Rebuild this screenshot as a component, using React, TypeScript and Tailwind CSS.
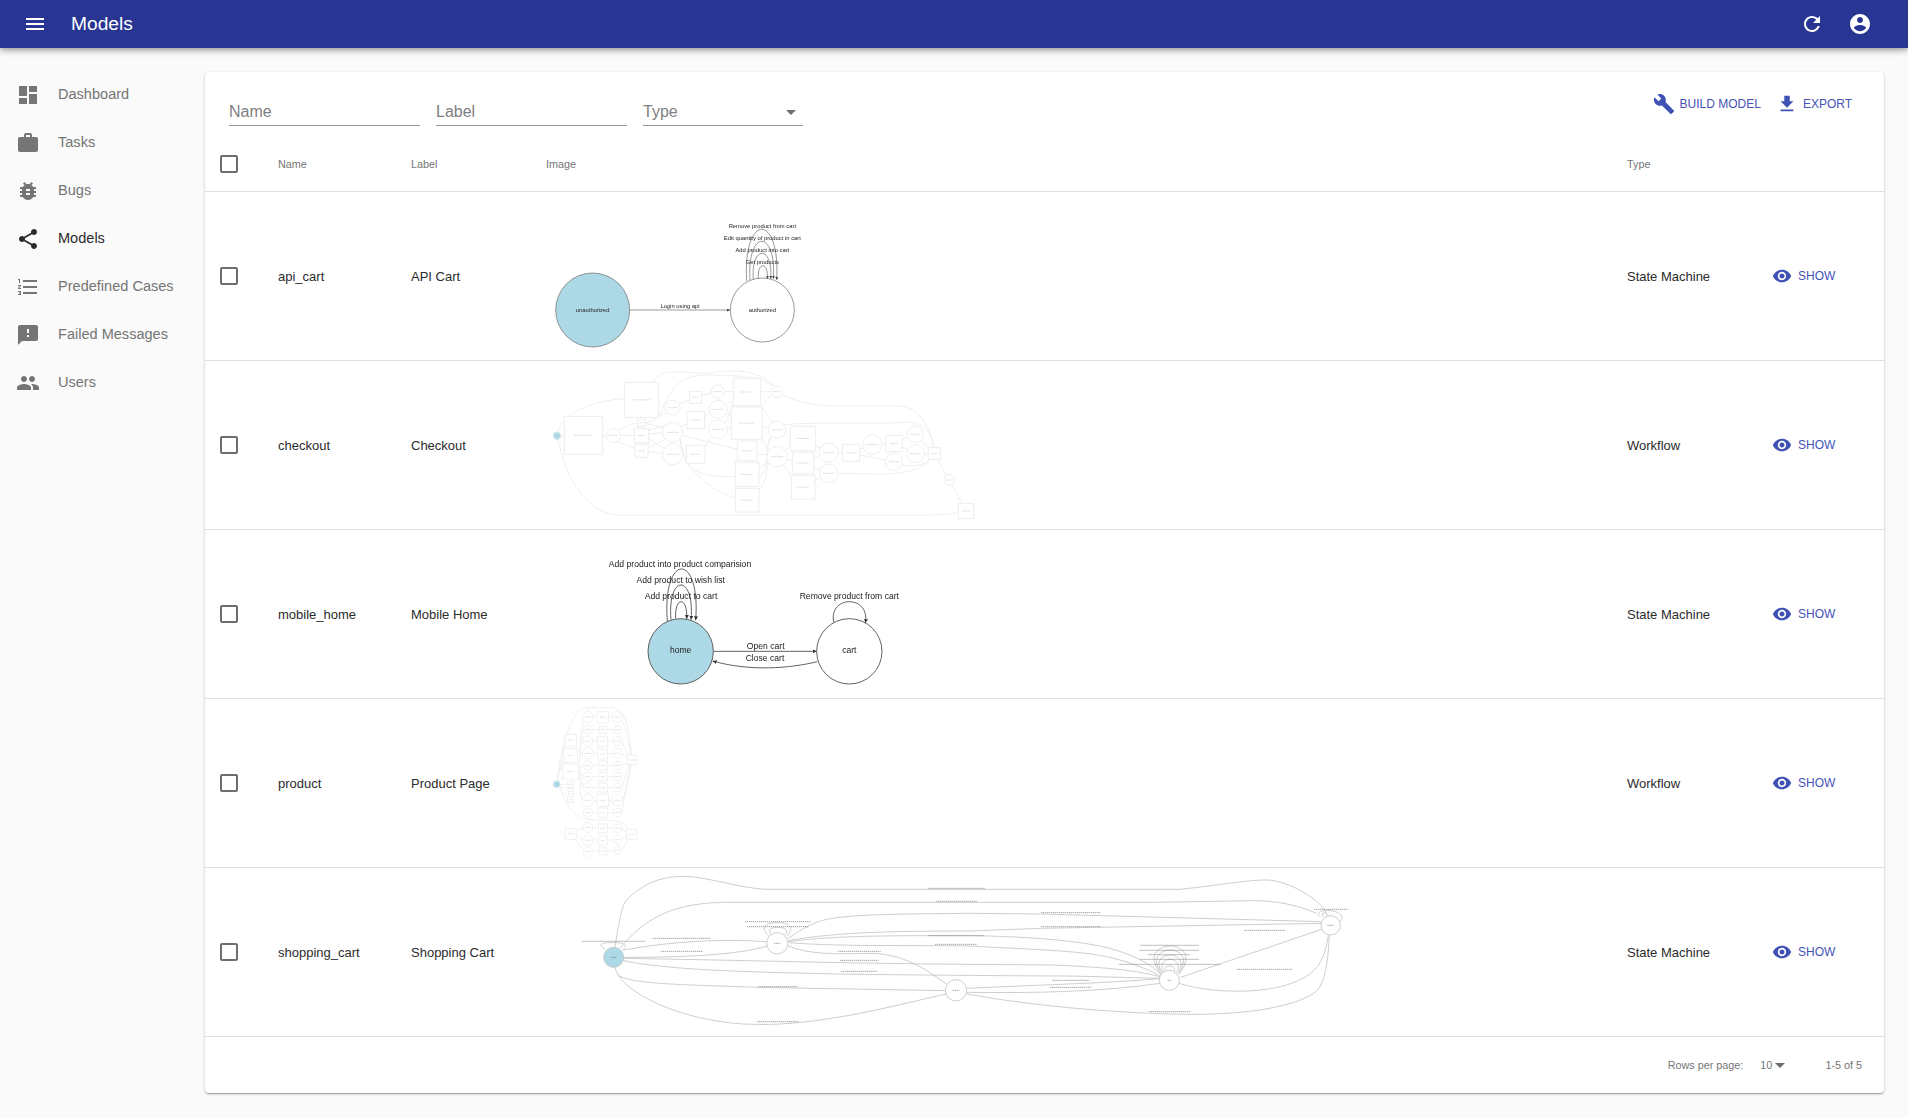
import type { ReactNode } from "react"

const icons = {
  menu: "M3 18h18v-2H3v2zm0-5h18v-2H3v2zm0-7v2h18V6H3z",
  dashboard: "M3 13h8V3H3v10zm0 8h8v-6H3v6zm10 0h8V11h-8v10zm0-18v6h8V3h-8z",
  work: "M20 6h-4V4c0-1.11-.89-2-2-2h-4c-1.11 0-2 .89-2 2v2H4c-1.11 0-1.99.89-1.99 2L2 19c0 1.11.89 2 2 2h16c1.11 0 2-.89 2-2V8c0-1.11-.89-2-2-2zm-6 0h-4V4h4v2z",
  bug: "M20 8h-2.81c-.45-.78-1.07-1.45-1.82-1.96L17 4.41 15.59 3l-2.17 2.17C12.96 5.06 12.49 5 12 5c-.49 0-.96.06-1.41.17L8.41 3 7 4.41l1.62 1.63C7.88 6.55 7.26 7.22 6.81 8H4v2h2.09c-.05.33-.09.66-.09 1v1H4v2h2v1c0 .34.04.67.09 1H4v2h2.81c1.04 1.79 2.97 3 5.19 3s4.15-1.21 5.19-3H20v-2h-2.09c.05-.33.09-.66.09-1v-1h2v-2h-2v-1c0-.34-.04-.67-.09-1H20V8zm-6 8h-4v-2h4v2zm0-4h-4v-2h4v2z",
  share: "M18 16.08c-.76 0-1.44.3-1.96.77L8.91 12.7c.05-.23.09-.46.09-.7s-.04-.47-.09-.7l7.05-4.11c.54.5 1.25.81 2.04.81 1.66 0 3-1.34 3-3s-1.34-3-3-3-3 1.34-3 3c0 .24.04.47.09.7L8.04 9.81C7.5 9.31 6.79 9 6 9c-1.66 0-3 1.34-3 3s1.34 3 3 3c.79 0 1.5-.31 2.04-.81l7.12 4.16c-.05.21-.08.43-.08.65 0 1.61 1.31 2.92 2.92 2.92 1.61 0 2.92-1.31 2.92-2.92s-1.31-2.92-2.92-2.92z",
  list: "M2 17h2v.5H3v1h1v.5H2v1h3v-4H2v1zm1-9h1V4H2v1h1v3zm-1 3h1.8L2 13.1v.9h3v-1H3.2L5 10.9V10H2v1zm5-6v2h14V5H7zm0 14h14v-2H7v2zm0-6h14v-2H7v2z",
  feedback: "M20 2H4c-1.1 0-1.99.9-1.99 2L2 22l4-4h14c1.1 0 2-.9 2-2V4c0-1.1-.9-2-2-2zm-7 12h-2v-2h2v2zm0-4h-2V6h2v4z",
  people: "M16 11c1.66 0 2.99-1.34 2.99-3S17.66 5 16 5c-1.66 0-3 1.34-3 3s1.34 3 3 3zm-8 0c1.66 0 2.99-1.34 2.99-3S9.66 5 8 5C6.34 5 5 6.34 5 8s1.34 3 3 3zm0 2c-2.33 0-7 1.17-7 3.5V19h14v-2.5c0-2.33-4.67-3.5-7-3.5zm8 0c-.29 0-.62.02-.97.05 1.16.84 1.97 1.97 1.97 3.45V19h6v-2.5c0-2.33-4.67-3.5-7-3.5z",
  refresh: "M17.65 6.35C16.2 4.9 14.21 4 12 4c-4.42 0-7.99 3.58-7.99 8s3.57 8 7.99 8c3.73 0 6.84-2.55 7.73-6h-2.08c-.82 2.33-3.04 4-5.65 4-3.31 0-6-2.69-6-6s2.69-6 6-6c1.66 0 3.14.69 4.22 1.78L13 11h7V4l-2.35 2.35z",
  account: "M12 2C6.48 2 2 6.48 2 12s4.48 10 10 10 10-4.48 10-10S17.52 2 12 2zm0 3c1.66 0 3 1.34 3 3s-1.34 3-3 3-3-1.34-3-3 1.34-3 3-3zm0 14.2c-2.5 0-4.71-1.28-6-3.22.03-1.99 4-3.08 6-3.08 1.99 0 5.97 1.09 6 3.08-1.29 1.94-3.5 3.22-6 3.22z",
  build: "M22.7 19l-9.1-9.1c.9-2.3.4-5-1.5-6.9-2-2-5-2.4-7.4-1.3L9 6 6 9 1.6 4.7C.4 7.1.9 10.1 2.9 12.1c1.9 1.9 4.6 2.4 6.9 1.5l9.1 9.1c.4.4 1 .4 1.4 0l2.3-2.3c.5-.4.5-1.1.1-1.4z",
  download: "M19 9h-4V3H9v6H5l7 7 7-7zM5 18v2h14v-2H5z",
  eye: "M12 4.5C7 4.5 2.73 7.61 1 12c1.73 4.39 6 7.5 11 7.5s9.27-3.11 11-7.5c-1.73-4.39-6-7.5-11-7.5zM12 17c-2.76 0-5-2.24-5-5s2.24-5 5-5 5 2.24 5 5-2.24 5-5 5zm0-8c-1.66 0-3 1.34-3 3s1.34 3 3 3 3-1.34 3-3-1.34-3-3-3z",
  box: "M19 5v14H5V5h14m0-2H5c-1.1 0-2 .9-2 2v14c0 1.1.9 2 2 2h14c1.1 0 2-.9 2-2V5c0-1.1-.9-2-2-2z",
  drop: "M7 10l5 5 5-5z",
}

function Icon({ d, className }: { d: string; className: string }) {
  return (
    <svg viewBox="0 0 24 24" className={className} fill="currentColor">
      <path d={d} />
    </svg>
  )
}

// all diagram coordinates are 3x page pixels, measured from the point (ox, oy)
function Diagram({ ox, oy, rowTop, width, children }: { ox: number; oy: number; rowTop: number; width: number; children: ReactNode }) {
  return (
    <svg
      viewBox={`${(546 - ox) * 3} ${(rowTop - oy) * 3} ${width * 3} ${168 * 3}`}
      width={width}
      height={168}
      className="block overflow-visible blur-[0.3px]"
      fontFamily="'Liberation Sans', Arial, sans-serif"
    >
      {children}
    </svg>
  )
}

function loop(x1: number, y1: number, x2: number, y2: number, peak: number, flare = 10) {
  const cy = peak - (((y1 + y2) / 2 - peak) / 3)
  return `M${x1},${y1} C${x1 - flare},${cy} ${x2 + flare},${cy} ${x2},${y2}`
}

function Arrows({ id, fill, size }: { id: string; fill: string; size: number }) {
  return (
    <defs>
      <marker id={id} markerUnits="userSpaceOnUse" markerWidth={size} markerHeight={size} refX={size} refY={size / 2} orient="auto">
        <path d={`M0,0 L${size},${size / 2} L0,${size} z`} fill={fill} />
      </marker>
    </defs>
  )
}

function ApiCartGraph() {
  return (
    <Diagram ox={540} oy={200} rowTop={192} width={300}>
      <Arrows id="a1" fill="#444" size={9} />
      <g fill="none" stroke="#666" strokeWidth="2">
        <circle cx="158" cy="330" r="111" fill="#add8e6" />
        <circle cx="667" cy="330" r="96" fill="#fff" />
        <path d="M270,330 L570,330" markerEnd="url(#a1)" strokeWidth="3" stroke="#999" />
        <path d={loop(655, 236, 682, 236, 197, 4)} markerEnd="url(#a1)" />
        <path d={loop(640, 238, 692, 236, 160, 8)} markerEnd="url(#a1)" />
        <path d={loop(630, 240, 700, 236, 124, 10)} markerEnd="url(#a1)" />
        <path d={loop(620, 243, 710, 240, 88, 12)} markerEnd="url(#a1)" />
      </g>
      <g fontSize="17.5" fill="#222" textAnchor="middle">
        <text x="667" y="84">Remove product from cart</text>
        <text x="667" y="120">Edit quantity of product in cart</text>
        <text x="667" y="156">Add product into cart</text>
        <text x="667" y="192">Get products</text>
        <text x="420" y="323">Login using api</text>
        <text x="158" y="336">unauthorized</text>
        <text x="667" y="336">authorized</text>
      </g>
    </Diagram>
  )
}

function MobileHomeGraph() {
  return (
    <Diagram ox={590} oy={545} rowTop={530} width={340}>
      <Arrows id="a3" fill="#333" size={12} />
      <g fill="none" stroke="#444" strokeWidth="2.5">
        <circle cx="272" cy="319" r="98" fill="#add8e6" />
        <circle cx="778" cy="319" r="98" fill="#fff" />
        <path d="M370,319 L680,319" markerEnd="url(#a3)" />
        <path d="M682,350 C600,370 480,380 368,348" markerEnd="url(#a3)" />
        <path d={loop(257, 220, 290, 222, 170, 4)} markerEnd="url(#a3)" />
        <path d={loop(243, 224, 303, 224, 120, 12)} markerEnd="url(#a3)" />
        <path d={loop(232, 228, 317, 226, 72, 16)} markerEnd="url(#a3)" />
        <path d={loop(731, 232, 826, 234, 170, 16)} markerEnd="url(#a3)" />
      </g>
      <g fontSize="25.8" fill="#222" textAnchor="middle">
        <text x="270" y="65">Add product into product comparision</text>
        <text x="272" y="113">Add product to wish list</text>
        <text x="273" y="161">Add product to cart</text>
        <text x="778" y="161">Remove product from cart</text>
        <text x="527" y="311">Open cart</text>
        <text x="525" y="349">Close cart</text>
        <text x="272" y="323">home</text>
        <text x="778" y="323">cart</text>
      </g>
    </Diagram>
  )
}

const checkoutRects = [
  [253, 67, 103, 105], [73, 169, 115, 114], [292, 177, 24, 22], [283, 205, 43, 43], [285, 253, 39, 39],
  [449, 94, 36, 36], [441, 154, 53, 52], [439, 256, 56, 54], [580, 55, 82, 82], [574, 141, 93, 97],
  [592, 243, 59, 59], [586, 307, 71, 73], [586, 385, 71, 71], [751, 199, 76, 73], [757, 278, 64, 63],
  [754, 346, 71, 71], [907, 253, 52, 51], [1038, 226, 49, 49], [1165, 263, 36, 35], [1255, 430, 46, 46],
]
const checkoutCircles = [
  [220, 226, 21], [398, 143, 22], [398, 217, 30], [398, 283, 31], [534, 95, 20], [534, 148, 27], [534, 208, 28],
  [710, 95, 18], [711, 209, 26], [711, 290, 31], [866, 278, 29], [866, 340, 28], [997, 254, 29], [1126, 223, 25],
  [1126, 281, 27], [1062, 305, 26], [1228, 360, 16],
]
const checkoutEdges = [
  "M62,227 L73,227", "M188,226 L199,226", "M241,226 L283,226",
  "M53,216 C70,150 180,120 253,116",
  "M54,238 C80,370 150,465 240,465 L1150,465 C1200,465 1230,462 1255,458",
  "M236,212 C255,198 275,192 292,190", "M232,245 L285,265",
  "M338,66 C370,20 420,40 500,40 C580,25 660,30 704,80",
  "M358,170 C400,60 430,45 520,45 C600,45 680,55 703,80",
  "M316,188 C350,185 375,150 385,162",
  "M326,222 L369,218", "M326,212 L375,195", "M316,190 L375,205", "M326,235 L372,265", "M324,265 L372,240", "M324,275 L368,280",
  "M418,130 L449,120", "M485,105 L515,100", "M554,95 L580,95", "M560,130 L580,122", "M560,160 L574,165", "M555,190 L580,130", "M562,203 L574,203",
  "M420,200 L441,192", "M494,170 L508,160", "M429,283 L439,283", "M495,260 L514,232", "M426,225 L592,268",
  "M420,240 C440,310 430,350 586,350", "M422,238 C420,300 480,380 586,415",
  "M662,95 L692,95", "M667,135 L695,105", "M662,137 L700,190", "M667,200 L685,203", "M651,282 L680,285", "M657,325 L690,300",
  "M660,350 C690,320 670,270 695,230", "M656,395 C700,340 670,260 692,230", "M667,240 L686,270",
  "M735,270 L751,260", "M741,298 L757,302", "M730,315 L754,347",
  "M728,195 C800,185 1000,192 1080,188 C1130,180 1175,200 1180,263",
  "M728,105 C780,130 830,138 900,138 L1080,138 C1140,140 1175,210 1180,263",
  "M827,258 L842,265", "M821,295 L838,290", "M821,322 L842,330", "M825,360 L842,352",
  "M895,340 C1000,342 1060,345 1100,335 C1130,330 1160,315 1172,298",
  "M895,278 L907,278", "M959,268 L970,265", "M959,285 L1036,300", "M1026,254 L1038,252", "M1087,240 L1102,232", "M1087,260 L1100,268",
  "M1145,245 L1168,263", "M1153,281 L1165,281", "M1088,315 C1120,320 1150,318 1170,298",
  "M1193,298 L1218,347", "M1236,375 L1265,430",
]

function CheckoutGraph() {
  return (
    <Diagram ox={540} oy={360} rowTop={361} width={460}>
      <g fill="none" stroke="#eee" strokeWidth="3">
        {checkoutEdges.map((d) => <path key={d} d={d} />)}
        {checkoutRects.map(([x, y, w, h]) => <rect key={`${x}-${y}`} x={x} y={y} width={w} height={h} fill="#fff" />)}
        {checkoutCircles.map(([x, y, r]) => <circle key={`${x}-${y}`} cx={x} cy={y} r={r} fill="#fff" />)}
        <circle cx="51" cy="227" r="11" fill="#add8e6" stroke="#d5e8ee" />
      </g>
      {/* node captions are too small to read in the picture, so they are drawn as specks */}
      <g stroke="#bbb" strokeWidth="2" strokeDasharray="2 1.5">
        {checkoutRects.map(([x, y, w, h]) => <path key={`${x}-${y}`} d={`M${x + w * 0.25},${y + h / 2} h${w * 0.5}`} />)}
        {checkoutCircles.map(([x, y, r]) => <path key={`${x}-${y}`} d={`M${x - r * 0.6},${y} h${r * 1.2}`} />)}
        <path d="M46,227 h10" />
      </g>
    </Diagram>
  )
}

const productRects = [
  [75, 103, 35, 35], [71, 145, 42, 42], [68, 192, 48, 45], [83, 244, 18, 18], [85, 266, 16, 16], [83, 289, 18, 18],
  [76, 385, 32, 33], [263, 166, 25, 28], [260, 388, 30, 30],
  [172, 35, 33, 33], [178, 78, 22, 22], [173, 109, 30, 30], [173, 147, 30, 30], [176, 183, 26, 26], [176, 217, 26, 26],
  [176, 250, 26, 26], [170, 283, 36, 36], [175, 324, 28, 28], [175, 372, 27, 27], [175, 408, 27, 27], [177, 443, 23, 21],
]
const productCircles = [
  [143, 51, 17], [232, 51, 17], [143, 89, 14], [232, 89, 12], [143, 123, 15], [232, 123, 14], [143, 160, 17], [232, 160, 15],
  [143, 196, 14], [232, 196, 13], [143, 230, 14], [232, 230, 13], [143, 263, 14], [232, 263, 13], [143, 301, 18], [232, 301, 17],
  [143, 338, 14], [232, 338, 13], [143, 382, 15], [233, 385, 13], [143, 421, 16], [233, 419, 13], [143, 455, 14], [233, 451, 12],
]
const productRows = [51, 89, 123, 160, 196, 230, 263, 301, 338, 383, 420, 453]
const productEdges = [
  "M52,243 C60,150 90,40 130,25 C160,20 180,25 210,22 C250,20 265,60 275,166",
  "M60,260 C80,330 110,360 170,360 C220,360 250,360 265,388",
  "M50,243 L75,135", "M50,243 L71,180", "M54,243 L68,230", "M60,253 L83,253", "M58,258 L85,272", "M55,262 L83,295",
  "M116,205 L130,195", "M116,215 L130,228", "M116,225 L130,258",
  "M130,60 C118,100 118,200 122,260", "M128,95 C120,130 120,170 126,160", "M128,300 C120,290 118,270 122,240",
  "M108,395 L128,382", "M108,402 L127,421", "M104,418 L132,450",
  "M247,60 C260,100 270,140 272,166", "M244,123 L266,168", "M247,160 L264,175", "M245,196 L264,188", "M245,263 L268,194", "M249,301 L272,194", "M245,338 L275,194",
  "M246,385 L260,398", "M246,419 L260,408", "M245,451 L265,418",
]

function ProductGraph() {
  return (
    <Diagram ox={540} oy={700} rowTop={699} width={130}>
      <g fill="none" stroke="#f0f0f0" strokeWidth="3">
        {productEdges.map((d) => <path key={d} d={d} />)}
        {productRows.map((y) => <path key={y} d={`M150,${y} L225,${y}`} />)}
        {productRects.map(([x, y, w, h]) => <rect key={`${x}-${y}`} x={x} y={y} width={w} height={h} fill="#fff" />)}
        {productCircles.map(([x, y, r]) => <circle key={`${x}-${y}`} cx={x} cy={y} r={r} fill="#fff" />)}
        <circle cx="50" cy="253" r="10" fill="#add8e6" stroke="#d5e8ee" />
      </g>
      <g stroke="#c4c4c4" strokeWidth="2" strokeDasharray="2 1.5">
        {productRects.map(([x, y, w, h]) => <path key={`${x}-${y}`} d={`M${x + w * 0.25},${y + h / 2} h${w * 0.5}`} />)}
        {productCircles.map(([x, y, r]) => <path key={`${x}-${y}`} d={`M${x - r * 0.6},${y} h${r * 1.2}`} />)}
      </g>
    </Diagram>
  )
}

const cartEdges = [
  "M135,232 C150,130 160,95 175,85 C250,10 340,15 400,25 C480,40 540,58 600,58 L1830,58 C1950,45 2030,30 2090,30 C2150,30 2260,90 2270,135",
  "M150,235 C220,150 300,100 460,97 L1750,97 L2050,92 C2120,92 2180,105 2240,130",
  "M655,205 C720,160 750,150 800,143 C900,132 1000,132 1200,130 L1410,132 L2255,155",
  "M655,212 C800,185 1000,183 1200,183 L1410,175 L2255,160",
  "M655,215 C800,195 1000,197 1200,197 C1300,198 1500,205 1620,235 C1690,255 1740,280 1775,315",
  "M658,218 C800,230 1000,225 1200,228 C1400,240 1550,240 1650,270 C1700,285 1740,300 1770,318",
  "M160,265 C500,270 800,280 1200,283 L1450,285 C1550,290 1680,295 1770,320",
  "M160,272 C300,300 500,305 800,312 C1000,315 1400,318 1500,318 L1770,325",
  "M145,315 C175,345 400,345 560,352 L1130,362",
  "M135,292 C150,370 350,460 550,463 C750,470 1000,400 1128,372",
  "M160,240 C300,215 450,205 590,215",
  "M592,228 C500,255 350,262 160,262",
  "M655,228 C720,255 800,252 900,250 C1000,250 1070,300 1130,342",
  "M1190,355 C1400,345 1600,340 1770,326",
  "M1190,367 C1400,370 1600,365 1770,340",
  "M1190,372 C1400,410 1650,430 1850,433 C2050,435 2180,405 2230,370 C2270,350 2275,250 2278,196",
  "M1828,340 C1900,365 2050,375 2150,345 C2220,320 2260,300 2275,196",
  "M1832,322 L2255,178",
  "M105,238 C80,220 100,218 125,218 C170,215 175,232 158,240",
  "M598,200 C565,170 590,158 622,158 C665,158 670,175 652,198",
  "M605,195 C590,178 605,172 625,172 C650,172 655,185 645,195",
  "M2250,140 C2235,125 2260,120 2280,122 C2320,125 2325,150 2305,155",
  "M2260,140 C2250,128 2265,124 2275,138",
]
const cartLoops = [
  [1786, 305, 1812, 305, 288, 12],
  [1780, 307, 1820, 307, 268, 25],
  [1776, 308, 1824, 308, 255, 45],
  [1774, 310, 1826, 310, 240, 65],
  [1772, 312, 1828, 312, 228, 85],
]
const cartLabels = [
  [37, 225, 214], [248, 423, 205], [273, 398, 244], [525, 723, 155], [531, 715, 170], [804, 932, 244], [810, 926, 271], [813, 922, 304],
  [564, 683, 350], [561, 686, 455], [1075, 1245, 55], [1098, 1220, 94], [1413, 1593, 128], [1413, 1593, 170], [1075, 1242, 197], [1095, 1222, 223],
  [2022, 2145, 181], [2000, 2166, 298], [1737, 1862, 425], [1447, 1558, 331], [1440, 1566, 352], [1711, 1887, 226], [1708, 1888, 241],
  [1735, 1860, 254], [1711, 1887, 268], [1648, 1950, 283], [2232, 2334, 118],
]

function ShoppingCartGraph() {
  return (
    <Diagram ox={570} oy={870} rowTop={868} width={830}>
      <g fill="none" stroke="#c4c4c4" strokeWidth="2.5">
        {cartEdges.map((d) => <path key={d} d={d} />)}
        {cartLoops.map(([x1, y1, x2, y2, p, f]) => <path key={p} d={loop(x1, y1, x2, y2, p, f)} />)}
        <circle cx="131" cy="262" r="30" fill="#add8e6" />
        <circle cx="622" cy="220" r="32" fill="#fff" />
        <circle cx="1158" cy="361" r="32" fill="#fff" />
        <circle cx="1798" cy="331" r="30" fill="#fff" />
        <circle cx="2282" cy="166" r="29" fill="#fff" />
      </g>
      <g stroke="#808080" strokeWidth="2.2" strokeDasharray="4 2">
        {cartLabels.map(([x1, x2, y]) => <path key={`${x1}-${y}`} d={`M${x1},${y} H${x2}`} />)}
        <path d="M123,262 h16 M612,220 h20 M1148,361 h20 M1793,331 h10 M2272,166 h20" />
      </g>
    </Diagram>
  )
}

const navItems = [
  { label: "Dashboard", icon: icons.dashboard },
  { label: "Tasks", icon: icons.work },
  { label: "Bugs", icon: icons.bug },
  { label: "Models", icon: icons.share, active: true },
  { label: "Predefined Cases", icon: icons.list },
  { label: "Failed Messages", icon: icons.feedback },
  { label: "Users", icon: icons.people },
]

const rows = [
  { name: "api_cart", label: "API Cart", type: "State Machine", graph: <ApiCartGraph /> },
  { name: "checkout", label: "Checkout", type: "Workflow", graph: <CheckoutGraph /> },
  { name: "mobile_home", label: "Mobile Home", type: "State Machine", graph: <MobileHomeGraph /> },
  { name: "product", label: "Product Page", type: "Workflow", graph: <ProductGraph /> },
  { name: "shopping_cart", label: "Shopping Cart", type: "State Machine", graph: <ShoppingCartGraph /> },
]

function Filter({ label, className, select }: { label: string; className: string; select?: boolean }) {
  return (
    <div className={`flex h-[30px] items-center justify-between border-b border-[#949494] pt-0.5 text-base text-[#808080] ${className}`}>
      <span>{label}</span>
      {select && <Icon d={icons.drop} className="mr-0 h-6 w-6 text-[#6e6e6e]" />}
    </div>
  )
}

export default function App() {
  return (
    <div className="min-h-screen bg-[#fafafa] font-['Liberation_Sans',Arial,sans-serif]">
      <header className="relative z-10 flex h-12 items-center bg-[#283593] pl-[23px] pr-9 text-white shadow-[0_2px_4px_-1px_rgba(0,0,0,.2),0_4px_5px_0_rgba(0,0,0,.14),0_1px_10px_0_rgba(0,0,0,.12)]">
        <Icon d={icons.menu} className="h-6 w-6" />
        <h1 className="ml-6 flex-1 text-[19.2px]">Models</h1>
        <Icon d={icons.refresh} className="h-6 w-6" />
        <Icon d={icons.account} className="ml-6 h-6 w-6" />
      </header>

      <div className="flex">
        <nav className="w-[205px] shrink-0 pt-[23px]">
          {navItems.map((item) => (
            <div
              key={item.label}
              className={`flex h-12 items-center pl-4 text-[14.56px] ${item.active ? "text-[#2b2b2b]" : "text-[#757575]"}`}
            >
              <Icon d={item.icon} className="h-6 w-6 shrink-0" />
              <span className="ml-[18px]">{item.label}</span>
            </div>
          ))}
        </nav>

        <main className="flex-1 pb-6 pr-6 pt-6">
          <div className="rounded bg-white shadow-[0_1px_3px_0_rgba(0,0,0,.2),0_1px_1px_0_rgba(0,0,0,.14),0_2px_1px_-1px_rgba(0,0,0,.12)]">
            <div className="flex h-[65px] items-start pl-6 pr-8">
              <div className="mt-[24px] flex gap-4">
                <Filter label="Name" className="w-[191px]" />
                <Filter label="Label" className="w-[191px]" />
                <Filter label="Type" className="w-[160px]" select />
              </div>
              <div className="ml-auto mt-[21px] flex items-center text-xs text-[#4553b8]">
                <Icon d={icons.build} className="h-[22px] w-[22px] text-[#3f51b5]" />
                <span className="ml-[5px]">BUILD MODEL</span>
                <Icon d={icons.download} className="ml-[15px] h-[22px] w-[22px] text-[#3f51b5]" />
                <span className="ml-[5px]">EXPORT</span>
              </div>
            </div>

            <table className="w-full table-fixed border-separate border-spacing-0 text-[13px] text-[#2b2b2b]">
              <thead>
                <tr className="text-left text-[10.8px] text-[#757575]">
                  <th className="h-[55px] w-[73px] border-b border-[#e0e0e0] pl-3 font-normal">
                    <Icon d={icons.box} className="h-6 w-6 text-[#6e6e6e]" />
                  </th>
                  <th className="w-[133px] border-b border-[#e0e0e0] font-normal">Name</th>
                  <th className="w-[135px] border-b border-[#e0e0e0] font-normal">Label</th>
                  <th className="w-[1081px] border-b border-[#e0e0e0] font-normal">Image</th>
                  <th className="w-[135px] border-b border-[#e0e0e0] font-normal">Type</th>
                  <th className="border-b border-[#e0e0e0] font-normal" />
                </tr>
              </thead>
              <tbody>
                {rows.map((row) => (
                  <tr key={row.name}>
                    <td className="h-[169px] border-b border-[#e0e0e0] pl-3">
                      <Icon d={icons.box} className="h-6 w-6 text-[#6e6e6e]" />
                    </td>
                    <td className="border-b border-[#e0e0e0] pt-0.5">{row.name}</td>
                    <td className="border-b border-[#e0e0e0] pt-0.5">{row.label}</td>
                    <td className="border-b border-[#e0e0e0] align-top">{row.graph}</td>
                    <td className="border-b border-[#e0e0e0] pt-0.5">{row.type}</td>
                    <td className="border-b border-[#e0e0e0]">
                      <div className="flex items-center pl-[10px] text-xs text-[#4553b8]">
                        <Icon d={icons.eye} className="h-5 w-5 text-[#3f51b5]" />
                        <span className="ml-[6px]">SHOW</span>
                      </div>
                    </td>
                  </tr>
                ))}
              </tbody>
            </table>

            <div className="flex h-14 items-center pr-[22px] text-[10.8px] text-[#757575]">
              <span className="ml-auto">Rows per page:</span>
              <span className="ml-[17px]">10</span>
              <Icon d={icons.drop} className="-ml-1 h-6 w-6 text-[#6e6e6e]" />
              <span className="ml-[33px]">1-5 of 5</span>
            </div>
          </div>
        </main>
      </div>
    </div>
  )
}
